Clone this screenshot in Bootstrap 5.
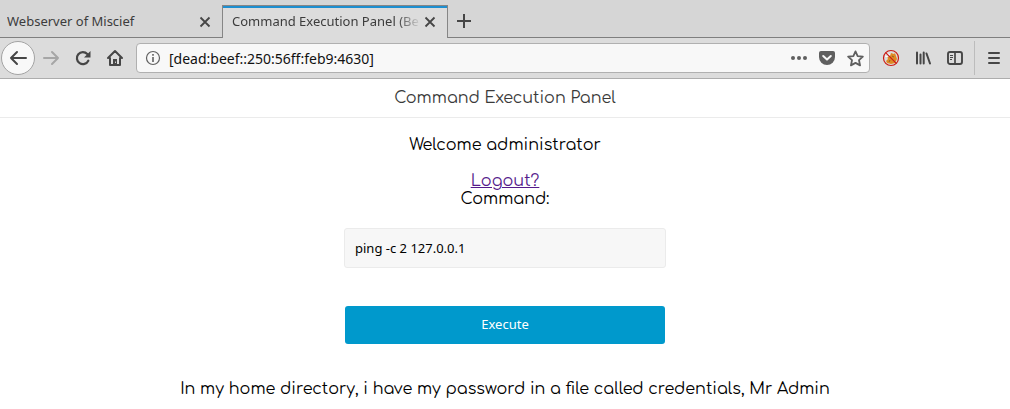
<!DOCTYPE html>
<html lang="en">
<head>
<meta charset="utf-8">
<meta name="viewport" content="width=device-width, initial-scale=1">
<title>Command Execution Panel</title>
<link href="https://cdn.jsdelivr.net/npm/bootstrap@5.3.0/dist/css/bootstrap.min.css" rel="stylesheet">
<style>
  body { font-family: "Noto Sans", "Open Sans", sans-serif; font-size: 13px; color: #000; background: #fff; }
  svg { display: block; flex: none; }
  .chrome-btn { padding: 0; border: 0; background: none; color: #464646; display: flex; align-items: center; justify-content: center; flex: none; }
  .tab-strip { background: #d6d6d6; height: 38px; padding-top: 5px; color: #3c3c3c; }
  .browser-tab { border-bottom: 1px solid #7f7f7f; padding: 2px 8px 0 7px; }
  .tab-first { flex: 0 1 222px; min-width: 0; }
  .tab-current { flex: 0 1 226px; min-width: 0; background: #dcdcdc; border: 1px solid #868686; border-bottom: 0; padding: 0 8px 0 9px; box-shadow: inset 0 2px #1e8fd0; }
  .tab-rest { border-bottom: 1px solid #7f7f7f; padding-left: 9px; }
  .tab-title { overflow: hidden; white-space: nowrap; min-width: 0; flex: 1 1 0; }
  .tab-fade { -webkit-mask-image: linear-gradient(to right, #000 calc(100% - 24px), transparent); mask-image: linear-gradient(to right, #000 calc(100% - 24px), transparent); }
  .tool-strip { background: #dcdcdc; height: 41px; border-bottom: 1px solid #adadad; padding: 0 0 0 1px; }
  .round-back { width: 34px; height: 34px; border: 1px solid #a3a3a3; border-radius: 50%; background: #f8f8f8; }
  .tool-btn { width: 32px; height: 32px; }
  .url-box { background: #f8f8f8; border: 1px solid #b0b0b0; border-radius: 4px; height: 30px; padding: 0 0 0 8px; margin: 0 5px; color: #606060; }
  .url-box input { border: 0; background: none; outline: 0; padding: 0; color: #111; min-width: 0; height: 28px; font-size: 14px; }
  .url-btn { width: 28px; height: 28px; color: #5f5f5f; }
  .tool-rule { width: 1px; height: 34px; background: #bcbcbc; margin: 0 3px; }
  .page-text { font-family: Comfortaa, Inter, sans-serif; font-size: 16px; line-height: 18px; }
  .page-title { font-size: 16px; line-height: 18px; font-weight: 400; color: #3a3a3a; padding: 10px 0; margin: 0 0 18px; border-bottom: 1px solid #ebebeb; }
  .visited-link { color: #551a8b; text-decoration: underline; }
  .command-form { width: 322px; max-width: 100%; }
  .command-form .form-control { height: 40px; padding: 0 10px; margin: 20px 0 38px; font-family: "Noto Sans", sans-serif; font-size: 13px; color: #000; background: #f7f7f7; border: 1px solid #ebebeb; border-radius: 3px; }
  .run-btn { height: 38px; padding: 0; margin: 0 1px 36px; font-family: "Noto Sans", sans-serif; font-size: 13px; color: #fff; background: #0099cc; border: 0; border-radius: 3px; }
</style>
</head>
<body>
<header>
  <div class="tab-strip d-flex">
    <div class="browser-tab tab-first d-flex align-items-center">
      <span class="tab-title">Webserver of Miscief</span>
      <button class="chrome-btn" aria-label="Close tab"><svg width="18" height="18" viewBox="0 0 18 18" fill="none" stroke="currentColor" stroke-width="1.8"><path d="M4.500 4.500l9 9M13.500 4.500l-9 9"/></svg></button>
    </div>
    <div class="tab-current d-flex align-items-center">
      <span class="tab-title tab-fade">Command Execution Panel (Be</span>
      <button class="chrome-btn" aria-label="Close tab"><svg width="18" height="18" viewBox="0 0 18 18" fill="none" stroke="currentColor" stroke-width="1.8"><path d="M4.500 4.500l9 9M13.500 4.500l-9 9"/></svg></button>
    </div>
    <div class="tab-rest d-flex flex-grow-1 align-items-center">
      <button class="chrome-btn" aria-label="New tab"><svg width="14" height="14" viewBox="0 0 14 14" fill="none" stroke="currentColor" stroke-width="2"><path d="M7 0v14M0 7h14"/></svg></button>
    </div>
  </div>
  <nav class="tool-strip d-flex align-items-center">
    <button class="chrome-btn round-back" aria-label="Back"><svg width="18" height="18" viewBox="0 0 18 18" fill="none" stroke="currentColor" stroke-width="2" stroke-linecap="round" stroke-linejoin="round"><path d="M17 9H2M8 3L2 9l6 6"/></svg></button>
    <button class="chrome-btn tool-btn" aria-label="Forward" disabled><svg width="18" height="18" viewBox="0 0 18 18" fill="none" stroke="#a6a6a6" stroke-width="2" stroke-linecap="round" stroke-linejoin="round"><path d="M2 9h14M10 3l6 6-6 6"/></svg></button>
    <button class="chrome-btn tool-btn" aria-label="Reload"><svg width="16" height="16" viewBox="0 0 16 16"><path d="M13.300 10.700A6 6 0 1 1 12.300 4" fill="none" stroke="currentColor" stroke-width="2.200" stroke-linecap="round"/><path d="M15.500 1v6.500H9z" fill="currentColor"/></svg></button>
    <button class="chrome-btn tool-btn" aria-label="Home"><svg width="18" height="18" viewBox="0 0 18 18" fill="none" stroke="currentColor" stroke-width="2" stroke-linecap="round" stroke-linejoin="round"><path d="M2 9l7-7 7 7M4 9v7h10V9"/><path d="M7 10h4v6H7z" fill="currentColor" stroke="none"/><path d="M9.500 13v.5" stroke="#dcdcdc" stroke-width="1"/></svg></button>
    <div class="url-box d-flex flex-grow-1 align-items-center">
      <svg width="16" height="16" viewBox="0 0 16 16"><circle cx="8" cy="8" r="6.500" fill="none" stroke="currentColor" stroke-width="1.200"/><path d="M7.200 7h1.600v5H7.200zM7.200 4h1.600v1.700H7.200z" fill="currentColor"/></svg>
      <input class="flex-grow-1 ms-2" type="text" aria-label="Address" value="[dead:beef::250:56ff:feb9:4630]">
      <button class="chrome-btn url-btn" aria-label="Page actions"><svg width="16" height="16" viewBox="0 0 16 16" fill="currentColor"><circle cx="2" cy="8" r="2"/><circle cx="8" cy="8" r="2"/><circle cx="14" cy="8" r="2"/></svg></button>
      <button class="chrome-btn url-btn" aria-label="Save to Pocket"><svg width="16" height="16" viewBox="0 0 16 16"><path d="M2 1h12a2 2 0 0 1 2 2v4A8 8 0 0 1 0 7V3a2 2 0 0 1 2-2z" fill="currentColor"/><path d="M4.200 6L8 9.600 11.800 6" fill="none" stroke="#f8f8f8" stroke-width="2" stroke-linecap="round" stroke-linejoin="round"/></svg></button>
      <button class="chrome-btn url-btn" aria-label="Bookmark"><svg width="17" height="17" viewBox="0 0 16 16" fill="none" stroke="currentColor" stroke-width="1.700" stroke-linejoin="round"><path d="M8 1.300l2 4.400 4.900.6-3.600 3.300 1 4.900L8 12.100l-4.300 2.400 1-4.900L1.100 6.300 6 5.700z"/></svg></button>
    </div>
    <button class="chrome-btn tool-btn" aria-label="Blocker"><svg width="18" height="18" viewBox="0 0 18 18"><path d="M4 12l2-2-1-2 3-1 1-3 3 1 1-1 1 3 1 3-2 4-4 1-4-1z" fill="#df8a24"/><path d="M3 7l3 1M4 4l4 2" stroke="#fff" stroke-width="1.300"/><path d="M7 13l1-2M10 7l2 1M12 13l1-1" stroke="#8e5f2a"/><circle cx="9" cy="9" r="7.500" fill="none" stroke="#cc1b14" stroke-width="1.200"/><path d="M3.700 3.700l10.600 10.600" stroke="#cc1b14" stroke-width="1.200"/></svg></button>
    <button class="chrome-btn tool-btn" aria-label="Library"><svg width="16" height="16" viewBox="0 0 16 16" stroke="currentColor" stroke-width="2" stroke-linecap="round"><path d="M2 2.500v11M5.500 4.500v9M8.700 2.500v11M11.500 3.500L15 13.500"/></svg></button>
    <button class="chrome-btn tool-btn" aria-label="Sidebar"><svg width="16" height="16" viewBox="0 0 16 16" fill="none" stroke="currentColor"><rect x="1" y="2" width="14" height="12" rx="2" stroke-width="1.900"/><path d="M8 2v12" stroke-width="1.700"/><path d="M3 5.500h3M3 7.500h3M3 9.500h2"/></svg></button>
    <div class="tool-rule"></div>
    <button class="chrome-btn tool-btn" aria-label="Menu"><svg width="14" height="14" viewBox="0 0 14 14" stroke="currentColor" stroke-width="2" stroke-linecap="round"><path d="M2 2h10M2 7h10M2 12h10"/></svg></button>
  </nav>
</header>
<main class="page-text text-center">
  <h1 class="page-title">Command Execution Panel</h1>
  <p class="mb-0">Welcome administrator</p>
  <br>
  <a class="visited-link" href="#">Logout?</a>
  <form class="command-form mx-auto d-flex flex-column">
    <label for="command">Command:</label>
    <input class="form-control" id="command" type="text" value="ping -c 2 127.0.0.1">
    <button class="btn run-btn" type="submit">Execute</button>
  </form>
  <p class="mb-0">In my home directory, i have my password in a file called credentials, Mr Admin</p>
</main>
<script src="https://cdn.jsdelivr.net/npm/bootstrap@5.3.0/dist/js/bootstrap.bundle.min.js"></script>
</body>
</html>
